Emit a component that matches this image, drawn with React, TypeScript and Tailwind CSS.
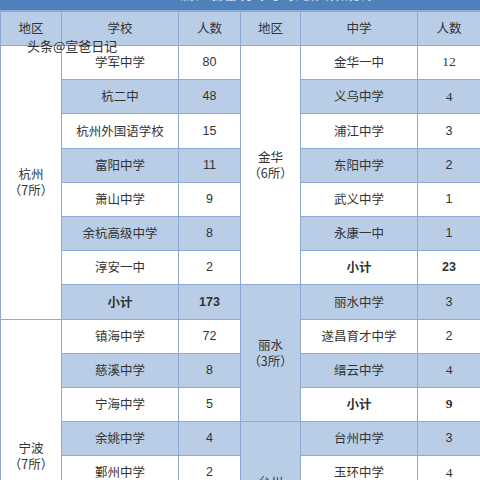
import React from "react";

type Cell = { region?: { name: string; count: string; span: number; blue: boolean }; school: string; num: string; bold?: boolean; blue: boolean; serif?: boolean };

const left: Cell[] = [
  { region: { name: "杭州", count: "（7所）", span: 8, blue: false }, school: "学军中学", num: "80", blue: false },
  { school: "杭二中", num: "48", blue: true },
  { school: "杭州外国语学校", num: "15", blue: false },
  { school: "富阳中学", num: "11", blue: true },
  { school: "萧山中学", num: "9", blue: false },
  { school: "余杭高级中学", num: "8", blue: true },
  { school: "淳安一中", num: "2", blue: false },
  { school: "小计", num: "173", bold: true, blue: true },
  { region: { name: "宁波", count: "（7所）", span: 8, blue: false }, school: "镇海中学", num: "72", blue: false },
  { school: "慈溪中学", num: "8", blue: true },
  { school: "宁海中学", num: "5", blue: false },
  { school: "余姚中学", num: "4", blue: true },
  { school: "鄞州中学", num: "2", blue: false },
  { school: "效实中学", num: "2", blue: true },
  { school: "北仑中学", num: "1", blue: false },
  { school: "小计", num: "94", bold: true, blue: true },
];

const right: Cell[] = [
  { region: { name: "金华", count: "（6所）", span: 7, blue: false }, school: "金华一中", num: "12", blue: false, serif: true },
  { school: "义乌中学", num: "4", blue: true, serif: true },
  { school: "浦江中学", num: "3", blue: false },
  { school: "东阳中学", num: "2", blue: true },
  { school: "武义中学", num: "1", blue: false },
  { school: "永康一中", num: "1", blue: true },
  { school: "小计", num: "23", bold: true, blue: false },
  { region: { name: "丽水", count: "（3所）", span: 4, blue: true }, school: "丽水中学", num: "3", blue: true },
  { school: "遂昌育才中学", num: "2", blue: false },
  { school: "缙云中学", num: "4", blue: true, serif: true },
  { school: "小计", num: "9", bold: true, blue: false, serif: true },
  { region: { name: "台州", count: "（3所）", span: 4, blue: true }, school: "台州中学", num: "3", blue: true },
  { school: "玉环中学", num: "4", blue: false, serif: true },
  { school: "温岭中学", num: "2", blue: true },
  { school: "小计", num: "9", bold: true, blue: false },
  { school: "", num: "", blue: true },
];

const cjk = { fontFamily: '"Noto Sans CJK SC", "Noto Sans", sans-serif' };

function Cells({ c }: { c: Cell }) {
  const bg = c.blue ? "bg-[#b9cde6]" : "bg-white";
  return (
    <>
      {c.region && (
        <td
          rowSpan={c.region.span}
          className={`border border-[#8eaad4] text-center align-middle text-[12.5px] leading-[16px] text-[#333] ${c.region.blue ? "bg-[#b9cde6]" : "bg-white"}`}
        >
          <div>{c.region.name}</div>
          <div>{c.region.count}</div>
        </td>
      )}
      <td className={`border border-[#8eaad4] text-center align-middle text-[12.5px] text-[#333] ${bg} ${c.bold ? "font-bold text-[#111]" : ""}`}>{c.school}</td>
      <td
        className={`border border-[#8eaad4] text-center align-middle text-[#333] ${c.serif ? "text-[13.5px]" : "text-[12.5px]"} ${bg} ${c.bold ? "font-bold text-[#111]" : ""}`}
        style={{ fontFamily: c.serif ? '"Liberation Serif", serif' : '"Liberation Sans", sans-serif' }}
      >
        {c.num}
      </td>
    </>
  );
}

export default function App() {
  return (
    <div className="relative h-[480px] w-[480px] overflow-hidden bg-white" style={cjk}>
      <div className="h-[11px] overflow-hidden border-b border-[#8eaad4] bg-[#4f81bd]">
        <div className="ml-[180px] mt-[-15px] text-[14px] font-bold leading-[16px] tracking-[1px] text-white/80">浙江省部分中学录取人数统计</div>
      </div>
      <table className="w-[480px] table-fixed border-collapse">
        <colgroup>
          <col className="w-[61px]" />
          <col className="w-[117px]" />
          <col className="w-[62px]" />
          <col className="w-[60px]" />
          <col className="w-[117px]" />
          <col className="w-[63px]" />
        </colgroup>
        <thead>
          <tr className="h-[34px] bg-[#b9cde6] text-[12.5px] text-[#333]">
            <th className="border border-[#8eaad4] font-normal">地区</th>
            <th className="border border-[#8eaad4] font-normal">学校</th>
            <th className="border border-[#8eaad4] font-normal">人数</th>
            <th className="border border-[#8eaad4] font-normal">地区</th>
            <th className="border border-[#8eaad4] font-normal">中学</th>
            <th className="border border-[#8eaad4] font-normal">人数</th>
          </tr>
        </thead>
        <tbody>
          {left.map((l, i) => (
            <tr key={i} className="h-[34.2px]">
              <Cells c={l} />
              <Cells c={right[i]} />
            </tr>
          ))}
        </tbody>
      </table>
      <div className="absolute left-[27px] top-[37px] text-[13px] leading-[17px] text-[#333]">头条@宣爸日记</div>
    </div>
  );
}
